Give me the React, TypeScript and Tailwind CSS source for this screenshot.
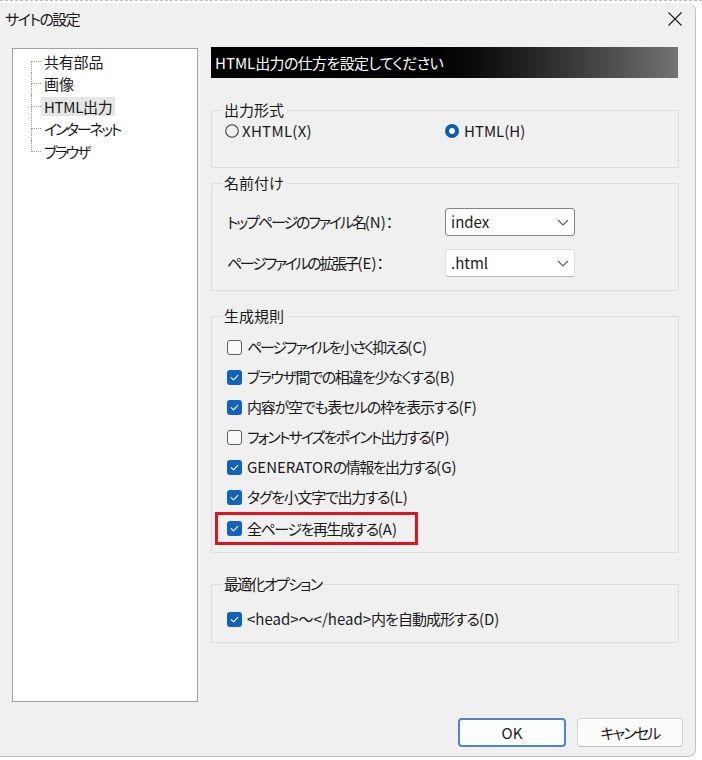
import React from "react";

function CheckOn() {
  return (
    <svg width="15" height="15" viewBox="0 0 15 15" className="shrink-0">
      <rect x="0" y="0" width="15" height="15" rx="3" fill="#0f62c0" />
      <path d="M4.3 7.7 L6.5 9.9 L10.8 5.4" fill="none" stroke="#ffffff" strokeWidth="1.2" strokeLinecap="round" strokeLinejoin="round" />
    </svg>
  );
}

function CheckOff() {
  return <span className="block shrink-0 w-[15px] h-[15px] rounded-[3px] border border-[#5e5e5e] bg-[#f9f9f9]" />;
}

function CheckRow({ on, children }: { on: boolean; children: React.ReactNode }) {
  return (
    <div className="flex items-center h-[30px] pl-[15px] gap-[5px]">
      {on ? <CheckOn /> : <CheckOff />}
      <span className="leading-[20px] whitespace-nowrap">{children}</span>
    </div>
  );
}

function Chevron() {
  return (
    <svg width="12" height="7" viewBox="0 0 12 7" className="shrink-0">
      <path d="M1 1 L6 6 L11 1" fill="none" stroke="#5a5a5a" strokeWidth="1.1" />
    </svg>
  );
}

function TreeRow({ label, pos, selected, tr }: { label: string; pos: "first" | "mid" | "last"; selected?: boolean; tr: string }) {
  return (
    <div className="flex h-[22.5px] items-center">
      <div className="ml-[18px] w-[10px] h-full flex flex-col">
        <div
          className={
            pos === "first"
              ? "flex-1 border-b border-dotted border-[#9a9a9a]"
              : "flex-1 border-l border-b border-dotted border-[#9a9a9a]"
          }
        />
        <div className={pos === "last" ? "flex-1" : "flex-1 border-l border-dotted border-[#9a9a9a]"} />
      </div>
      <span
        className={
          selected
            ? "px-[3px] h-[19px] bg-[#e6e6e6] flex items-center"
            : "px-[3px] h-[19px] flex items-center"
        }
      >
        <span className={tr}>{label}</span>
      </span>
    </div>
  );
}

export default function App() {
  return (
    <div className="w-[702px] h-[760px] bg-white overflow-hidden font-['Noto_Sans_CJK_JP',sans-serif] [font-feature-settings:'palt'] text-[15px] text-[#1a1a1a]">
      <div className="h-[3px] border-t border-dashed border-[#b4b8d0]" />
      <div className="w-[696px] h-[754px] bg-[#f0f0f0] border-r border-b border-[#bdbdbd] rounded-tr-[8px] rounded-br-[8px] flex flex-col">
        {/* title bar */}
        <div className="h-[44px] flex items-start justify-between">
          <div className="h-[30px] flex items-center pl-[5px] leading-none tracking-[-1.5px]">サイトの設定</div>
          <div className="h-[32px] flex items-center mr-[13px]">
            <svg width="14" height="14" viewBox="0 0 14 14">
              <path d="M0.5 0.5 L13.5 13.5 M13.5 0.5 L0.5 13.5" stroke="#1a1a1a" strokeWidth="1.1" />
            </svg>
          </div>
        </div>

        {/* body */}
        <div className="h-[655px] flex pl-[12px] gap-[13px]">
          {/* tree */}
          <div className="mt-[1px] w-[186px] h-[654px] bg-white border border-[#a2a2a2] pt-[1px]">
            <TreeRow label="共有部品" pos="first" tr="leading-[19px] tracking-[-0.2px] whitespace-nowrap" />
            <TreeRow label="画像" pos="mid" tr="leading-[19px] whitespace-nowrap" />
            <TreeRow label="HTML出力" pos="mid" selected tr="leading-[19px] tracking-[-0.3px] whitespace-nowrap" />
            <TreeRow label="インターネット" pos="mid" tr="leading-[19px] tracking-[-2.3px] whitespace-nowrap" />
            <TreeRow label="ブラウザ" pos="last" tr="leading-[19px] tracking-[-2.3px] whitespace-nowrap" />
          </div>

          {/* right column */}
          <div className="w-[468px] flex flex-col">
            <div className="h-[31px] w-[467px] flex items-center pl-[4px] text-white leading-none bg-gradient-to-r from-black from-40% to-[#737373]">
              HTML<span className="tracking-[-0.65px]">出力の仕方を設定してください</span>
            </div>

            {/* 出力形式 */}
            <fieldset className="mt-[22px] border border-[#dcdcdc] rounded-[2px]">
              <legend className="ml-[9px] px-[3px] leading-[20px]">出力形式</legend>
              <div className="mt-[1px] mb-[26px] h-[20px] flex items-center pl-[13px]">
                <div className="w-[220px] flex items-center gap-[3px]">
                  <svg width="14" height="14" viewBox="0 0 14 14" className="shrink-0">
                    <circle cx="7" cy="7" r="6.3" fill="none" stroke="#3c3c3c" strokeWidth="1.1" />
                  </svg>
                  <span className="leading-[20px] tracking-[0.3px]">XHTML(X)</span>
                </div>
                <div className="flex items-center gap-[5px]">
                  <svg width="14" height="14" viewBox="0 0 14 14" className="shrink-0">
                    <circle cx="7" cy="7" r="7" fill="#0b5cb0" />
                    <circle cx="7" cy="7" r="2.9" fill="#ffffff" />
                  </svg>
                  <span className="leading-[20px]">HTML(H)</span>
                </div>
              </div>
            </fieldset>

            {/* 名前付け */}
            <fieldset className="mt-[5px] border border-[#dcdcdc] rounded-[2px]">
              <legend className="ml-[9px] px-[3px] leading-[20px]">名前付け</legend>
              <div className="pt-[15px] pb-[13px] flex flex-col gap-[13px]">
                <div className="flex items-center h-[28px]">
                  <span className="w-[233px] shrink-0 pl-[15px] leading-[20px] whitespace-nowrap">
                    <span className="tracking-[-2.1px]">トップページのファイル名</span>(N)：
                  </span>
                  <div className="w-[130px] h-[28px] bg-white border border-[#858585] rounded-[3px] flex items-center justify-between pl-[5px] pr-[5px]">
                    <span className="leading-[20px]">index</span>
                    <Chevron />
                  </div>
                </div>
                <div className="flex items-center h-[28px]">
                  <span className="w-[233px] shrink-0 pl-[15px] leading-[20px] whitespace-nowrap">
                    <span className="tracking-[-2.3px]">ページファイルの拡張子</span>(E)：
                  </span>
                  <div className="w-[130px] h-[28px] bg-white border border-[#dedede] border-b-[#b5b5b5] rounded-[3px] flex items-center justify-between pl-[5px] pr-[5px]">
                    <span className="leading-[20px]">.html</span>
                    <Chevron />
                  </div>
                </div>
              </div>
            </fieldset>

            {/* 生成規則 */}
            <fieldset className="mt-[15px] border border-[#dcdcdc] rounded-[2px]">
              <legend className="ml-[9px] px-[3px] leading-[20px]">生成規則</legend>
              <div className="pt-[6px] pb-[7px]">
                <CheckRow on={false}>
                  <span className="tracking-[-2.15px]">ページファイルを小さく抑える</span>(C)
                </CheckRow>
                <CheckRow on={true}>
                  <span className="tracking-[-1.37px]">ブラウザ間での相違を少なくする</span>(B)
                </CheckRow>
                <CheckRow on={true}>
                  <span className="tracking-[-1.25px]">内容が空でも表セルの枠を表示する</span>(F)
                </CheckRow>
                <CheckRow on={false}>
                  <span className="tracking-[-1.9px]">フォントサイズをポイント出力する</span>(P)
                </CheckRow>
                <CheckRow on={true}>
                  GENERATOR<span className="tracking-[-1.5px]">の情報を出力する</span>(G)
                </CheckRow>
                <CheckRow on={true}>
                  <span className="tracking-[-1.27px]">タグを小文字で出力する</span>(L)
                </CheckRow>
                <div className="ml-[3px] w-[203px] h-[33px] border-[3px] border-[#e0141e] flex items-center pl-[9px] gap-[5px]">
                  <CheckOn />
                  <span className="leading-[20px] whitespace-nowrap">
                    <span className="tracking-[-1.45px]">全ページを再生成する</span>(A)
                  </span>
                </div>
              </div>
            </fieldset>

            {/* 最適化オプション */}
            <fieldset className="mt-[21px] border border-[#dcdcdc] rounded-[2px]">
              <legend className="ml-[9px] px-[3px] leading-[20px] tracking-[-1.7px]">最適化オプション</legend>
              <div className="pt-[10px] pb-[8px]">
                <CheckRow on={true}>
                  &lt;head&gt;〜&lt;/head&gt;<span className="tracking-[-1px]">内を自動成形する</span>(D)
                </CheckRow>
              </div>
            </fieldset>
          </div>
        </div>

        {/* footer */}
        <div className="flex justify-end gap-[11px] pt-[16px] pr-[12px]">
          <button className="w-[108px] h-[29px] bg-[#fdfdfd] border-2 border-[#4f86c4] rounded-[4px] flex items-center justify-center leading-none">
            OK
          </button>
          <button className="w-[106px] h-[29px] bg-[#fbfbfb] border border-[#d3d3d3] border-b-[#bdbdbd] rounded-[4px] flex items-center justify-center leading-none tracking-[-1.8px]">
            キャンセル
          </button>
        </div>
      </div>
    </div>
  );
}
